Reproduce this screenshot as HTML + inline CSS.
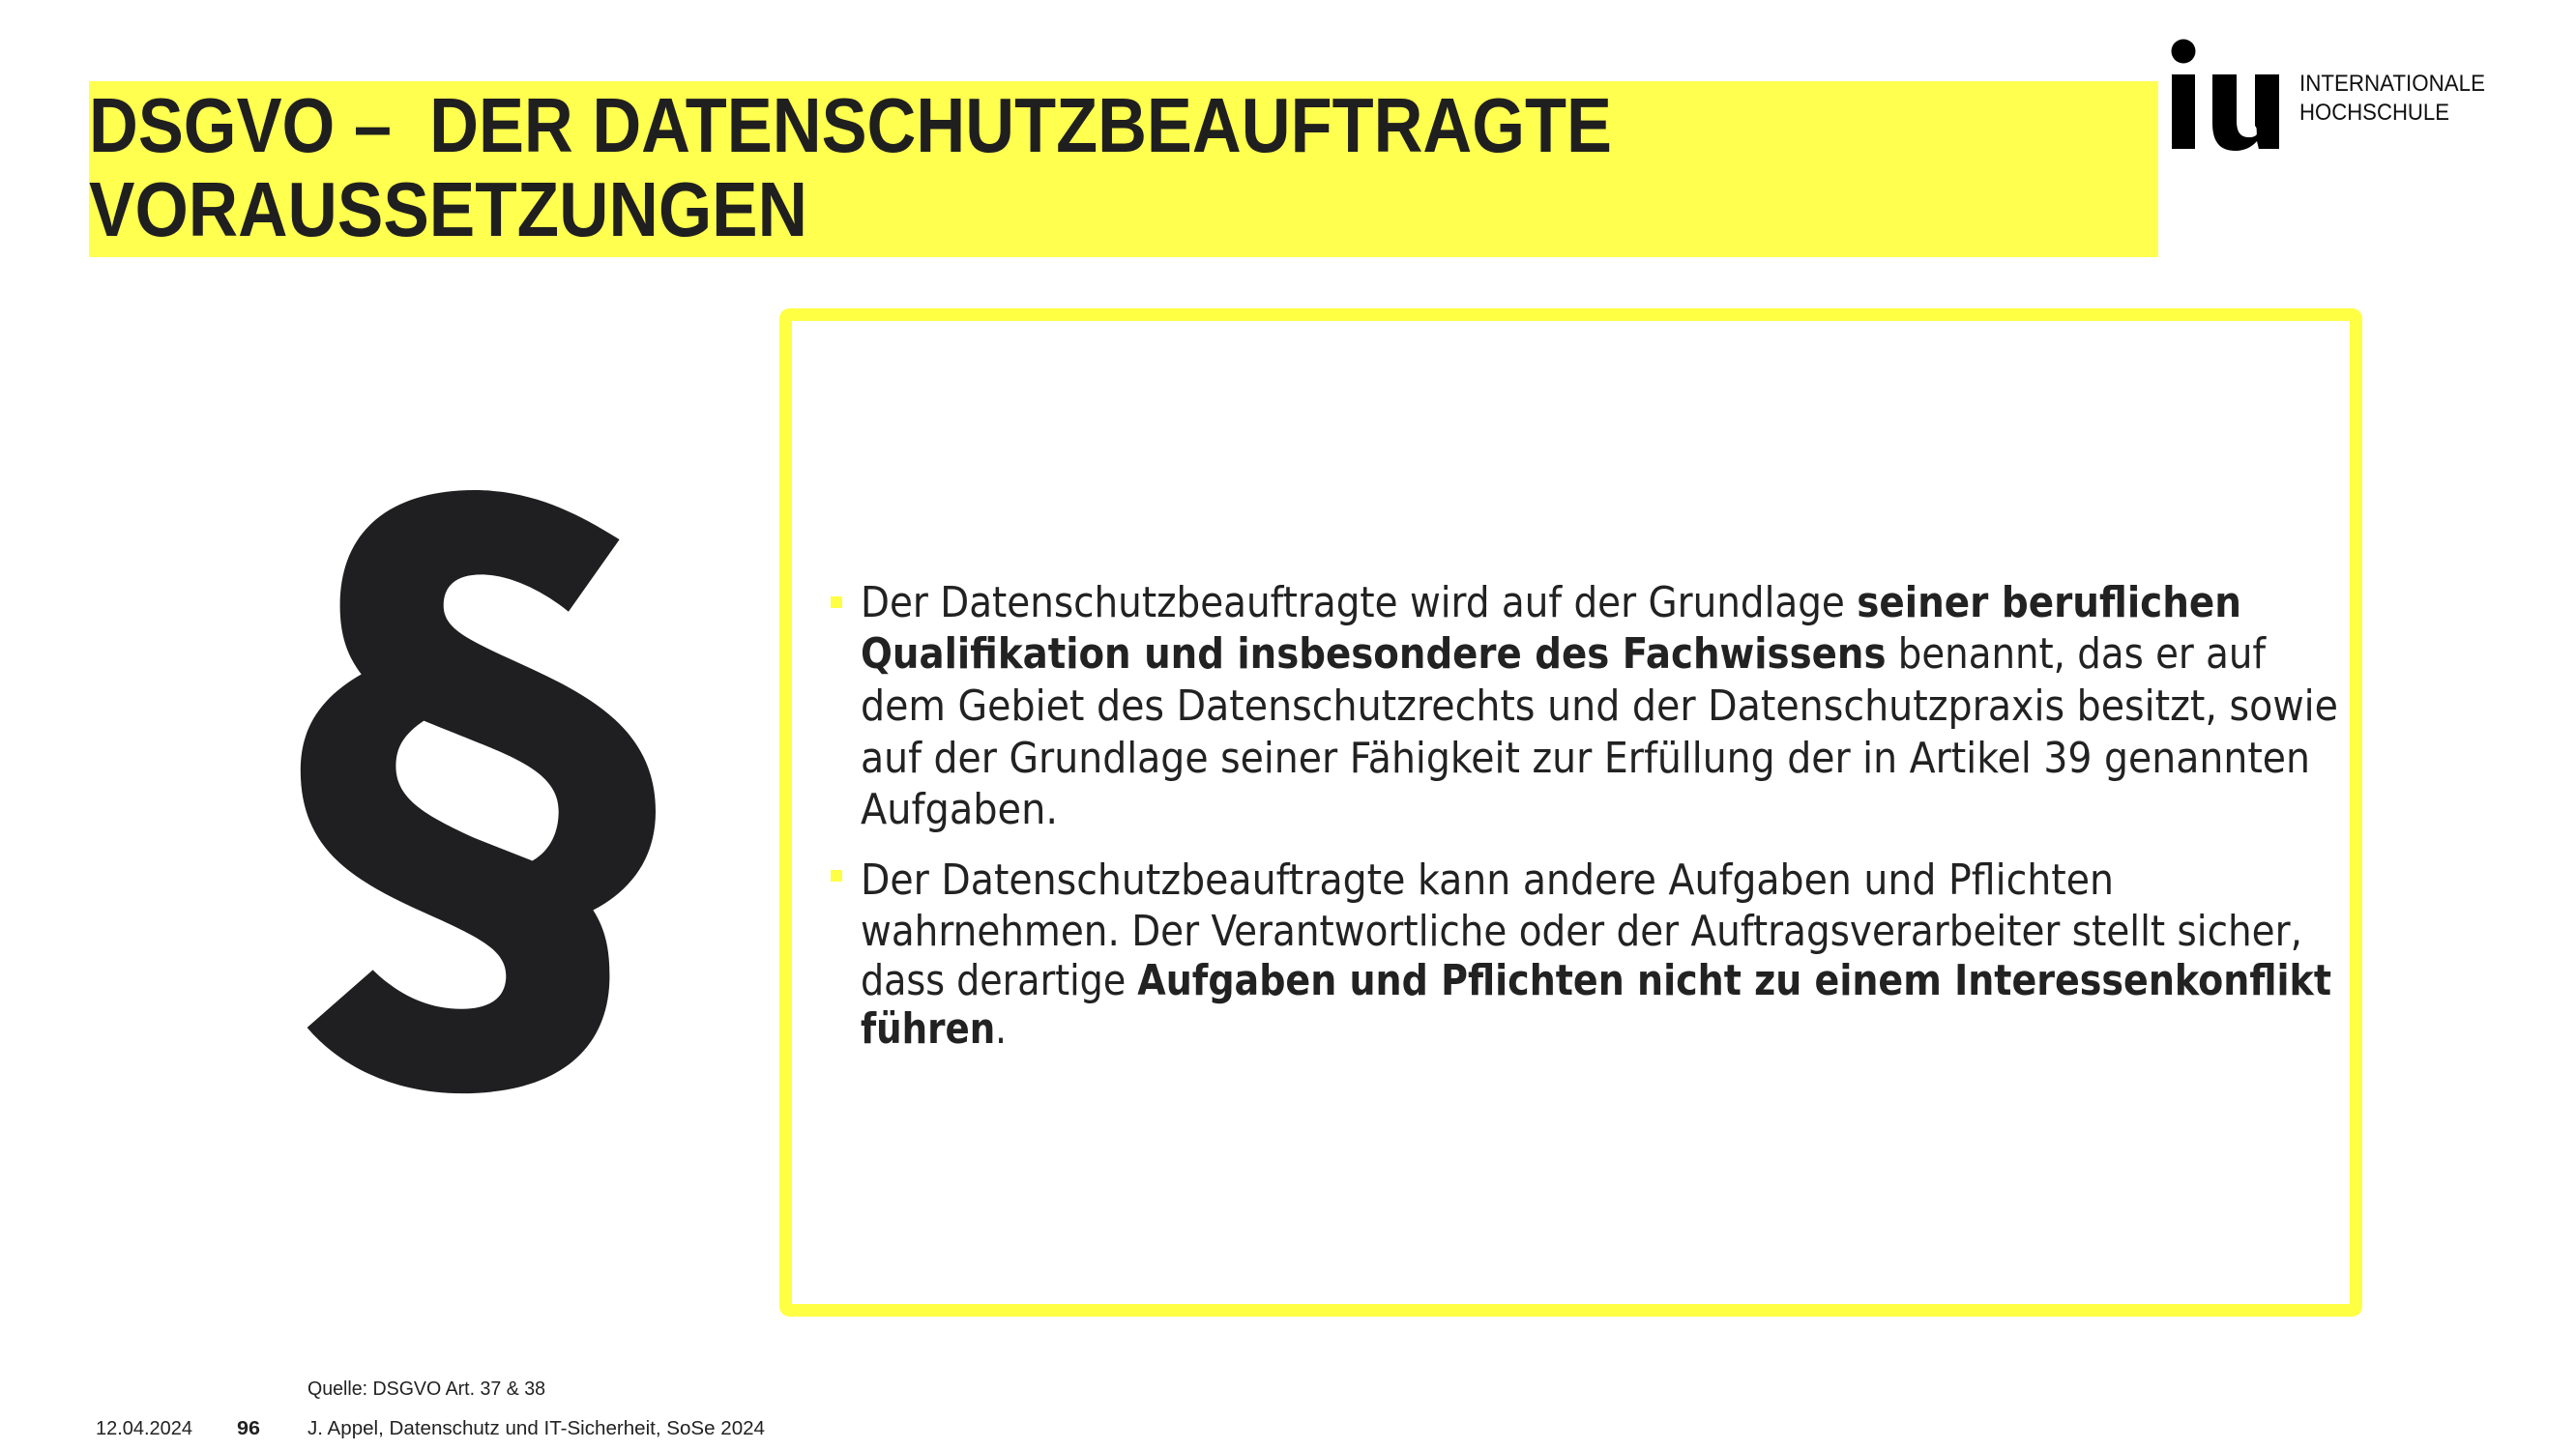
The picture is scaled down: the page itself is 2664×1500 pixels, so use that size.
<!DOCTYPE html>
<html><head><meta charset="utf-8"><style>
html,body{margin:0;padding:0;background:#fff;}
body{width:2664px;height:1500px;overflow:hidden;position:relative;}
svg{position:absolute;left:0;top:0;}
</style></head><body>
<svg width="2664" height="1500" viewBox="0 0 2664 1500" xmlns="http://www.w3.org/2000/svg">
<rect x="92" y="84" width="2140" height="182" fill="#ffff4f"/>
<g font-family="Liberation Sans, sans-serif" font-weight="bold" fill="#1f1f1f" font-size="80">
<text x="92" y="157" textLength="1575" lengthAdjust="spacingAndGlyphs">DSGVO –&#160; DER DATENSCHUTZBEAUFTRAGTE</text>
<text x="92" y="244" textLength="743" lengthAdjust="spacingAndGlyphs">VORAUSSETZUNGEN</text>
</g>
<!-- logo -->
<circle cx="2258" cy="53" r="12.5" fill="#000"/>
<rect x="2246" y="77" width="24" height="77" fill="#000"/>
<path d="M2288 77 H2313 V125 C2313 138 2318 142 2326 142 C2333 142 2338 138 2332 130 L2332 77 H2357 V154 H2336 L2334 146 C2328 153 2320 156 2312 156 C2295 156 2288 146 2288 127 Z" fill="#000"/>
<path d="M2332 77 H2357 V154 H2336 L2334 144 Z" fill="#000"/>
<g font-family="Liberation Sans, sans-serif" fill="#111" font-size="24">
<text x="2378" y="94" textLength="192" lengthAdjust="spacingAndGlyphs">INTERNATIONALE</text>
<text x="2378" y="124" textLength="155" lengthAdjust="spacingAndGlyphs">HOCHSCHULE</text>
</g>
<!-- box -->
<rect x="812.5" y="325.5" width="1624" height="1030" rx="4" fill="none" stroke="#ffff44" stroke-width="13"/>
<!-- paragraph sign -->
<g transform="translate(287,490) scale(0.34,0.426)">
<path fill="#1f1f21" fill-rule="evenodd" d="M1040 160 L885 335 C800 280 700 245 620 245 C540 245 505 275 505 320 C505 370 560 395 680 440 C900 520 1150 600 1150 820 C1150 930 1080 1010 960 1060 C1000 1110 1010 1160 1010 1220 C1010 1400 850 1505 560 1505 C340 1505 180 1430 90 1345 L290 1205 C360 1260 450 1300 560 1300 C650 1300 695 1270 695 1220 C695 1160 620 1130 500 1085 C260 1000 70 930 70 720 C70 610 140 540 255 487 C210 440 190 390 190 320 C190 140 340 40 600 40 C780 40 920 100 1040 160 Z M445 600 C390 630 360 660 360 710 C360 790 450 830 600 885 L775 940 C830 915 855 870 855 820 C855 740 760 700 600 650 C540 630 490 615 445 600 Z"/>
</g>
<!-- bullets -->
<rect x="859" y="617" width="12" height="12" fill="#ffff44"/>
<rect x="859" y="900" width="12" height="12" fill="#ffff44"/>
<g font-family="DejaVu Sans, sans-serif" fill="#222" font-size="44">
<text x="890" y="638" textLength="1428" lengthAdjust="spacingAndGlyphs">Der Datenschutzbeauftragte wird auf der Grundlage <tspan font-weight="bold">seiner beruflichen</tspan></text>
<text x="890" y="691" textLength="1453" lengthAdjust="spacingAndGlyphs"><tspan font-weight="bold">Qualifikation und insbesondere des Fachwissens</tspan> benannt, das er auf</text>
<text x="890" y="745" textLength="1528" lengthAdjust="spacingAndGlyphs">dem Gebiet des Datenschutzrechts und der Datenschutzpraxis besitzt, sowie</text>
<text x="890" y="799" textLength="1499" lengthAdjust="spacingAndGlyphs">auf der Grundlage seiner Fähigkeit zur Erfüllung der in Artikel 39 genannten</text>
<text x="890" y="852" textLength="204" lengthAdjust="spacingAndGlyphs">Aufgaben.</text>
<text x="890" y="925" textLength="1296" lengthAdjust="spacingAndGlyphs">Der Datenschutzbeauftragte kann andere Aufgaben und Pflichten</text>
<text x="890" y="978" textLength="1491" lengthAdjust="spacingAndGlyphs">wahrnehmen. Der Verantwortliche oder der Auftragsverarbeiter stellt sicher,</text>
<text x="890" y="1029" textLength="1521" lengthAdjust="spacingAndGlyphs">dass derartige <tspan font-weight="bold">Aufgaben und Pflichten nicht zu einem Interessenkonflikt</tspan></text>
<text x="890" y="1079" textLength="151" lengthAdjust="spacingAndGlyphs"><tspan font-weight="bold">führen</tspan>.</text>
</g>
<!-- footer -->
<g font-family="Liberation Sans, sans-serif" fill="#222" font-size="20">
<text x="318" y="1443" textLength="246" lengthAdjust="spacingAndGlyphs">Quelle: DSGVO Art. 37 &amp; 38</text>
<text x="99" y="1484" textLength="100" lengthAdjust="spacingAndGlyphs">12.04.2024</text>
<text x="245" y="1484" font-weight="bold" textLength="24" lengthAdjust="spacingAndGlyphs">96</text>
<text x="318" y="1484" textLength="473" lengthAdjust="spacingAndGlyphs">J. Appel, Datenschutz und IT-Sicherheit, SoSe 2024</text>
</g>
</svg>
</body></html>
